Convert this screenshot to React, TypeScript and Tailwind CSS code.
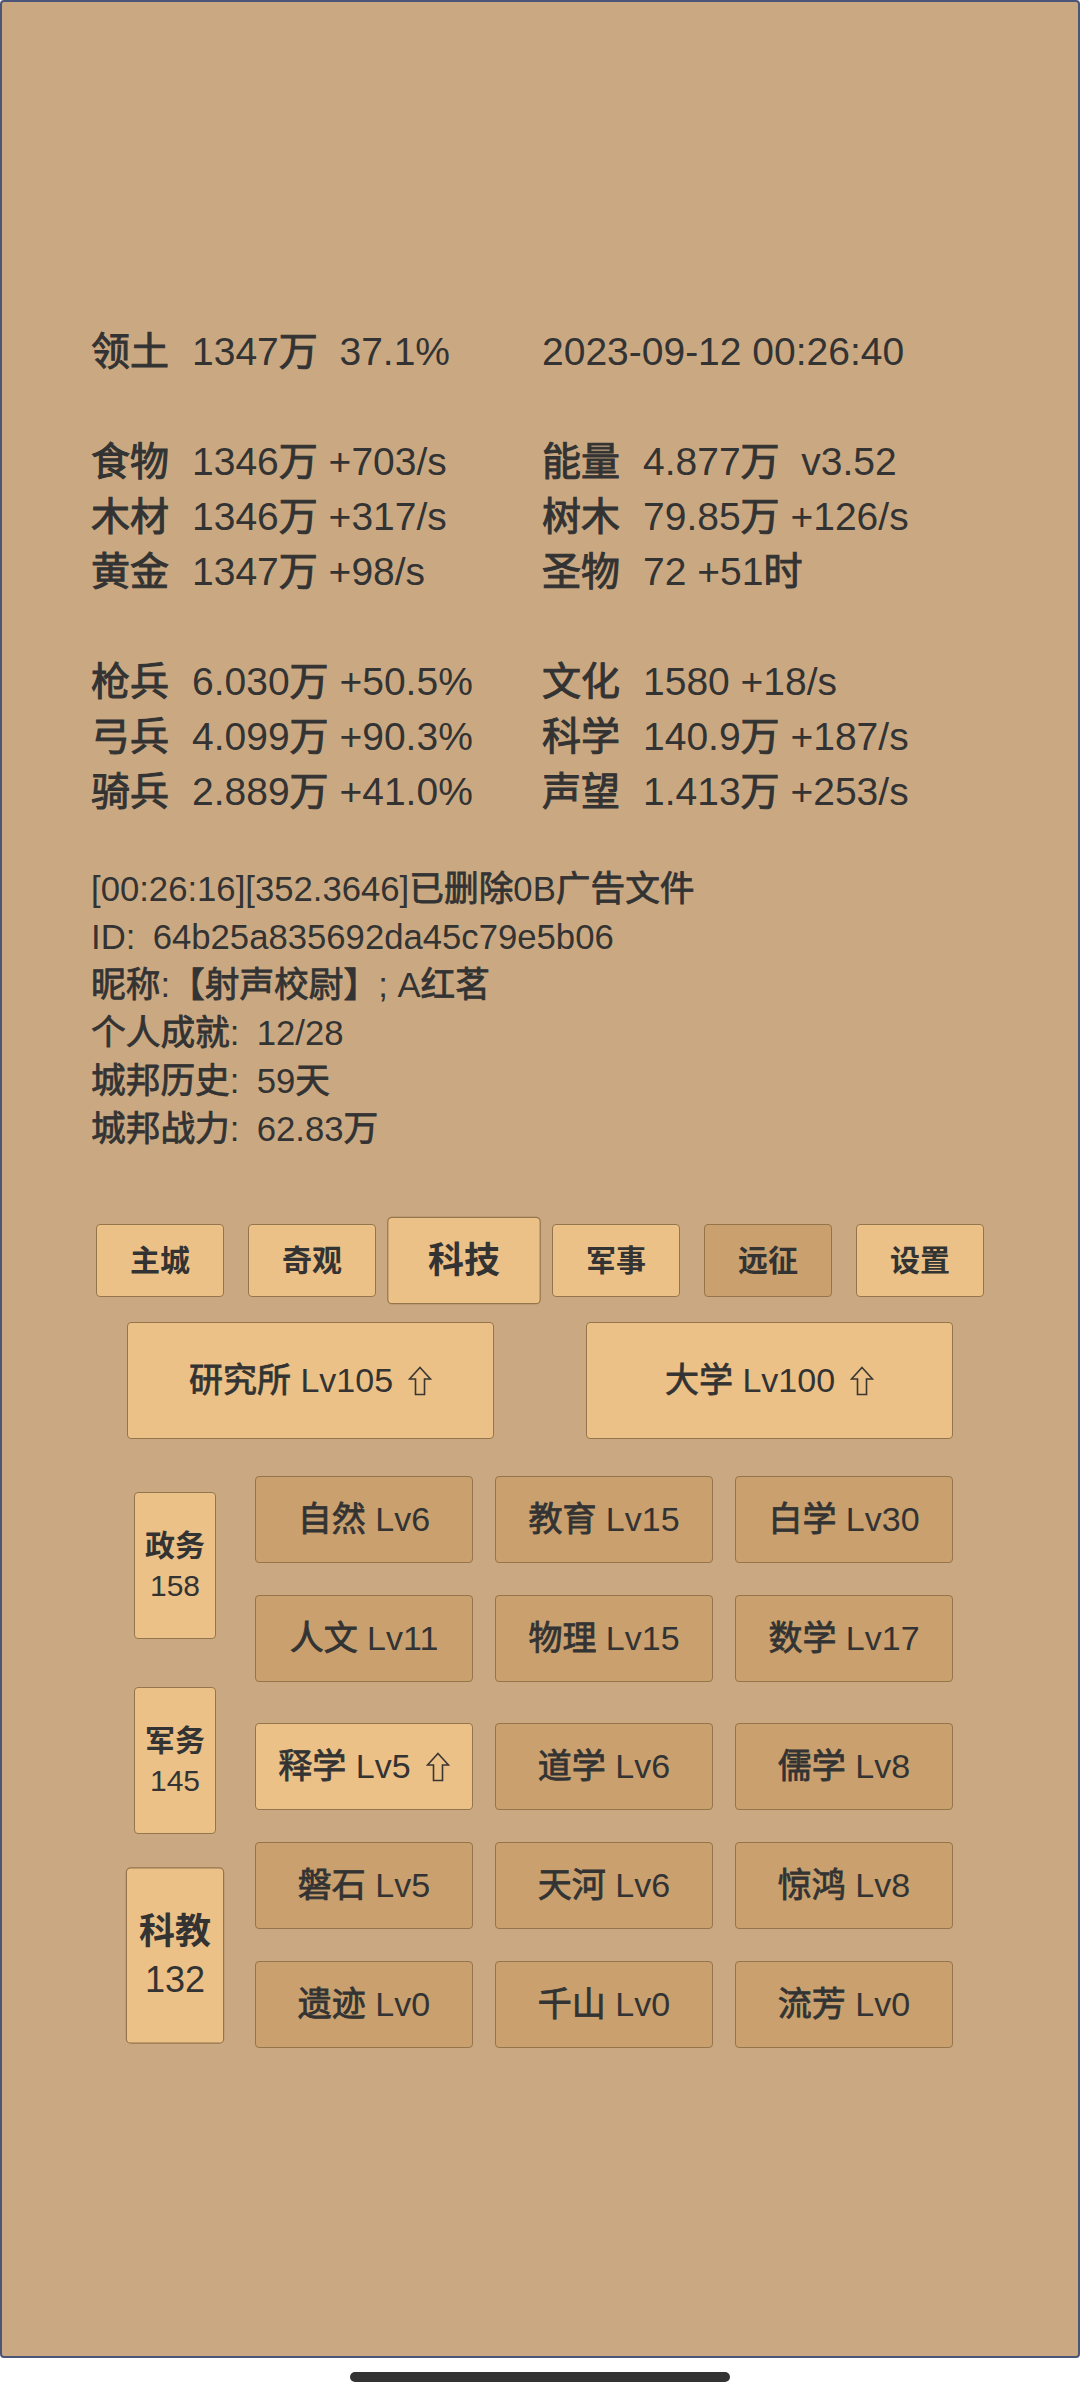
import React from "react";

type Stat = { label: string; value: string };

const statRows: ([Stat, Stat] | null)[] = [
  [
    { label: "领土", value: "1347万  37.1%" },
    { label: "", value: "2023-09-12 00:26:40" },
  ],
  null,
  [
    { label: "食物", value: "1346万 +703/s" },
    { label: "能量", value: "4.877万  v3.52" },
  ],
  [
    { label: "木材", value: "1346万 +317/s" },
    { label: "树木", value: "79.85万 +126/s" },
  ],
  [
    { label: "黄金", value: "1347万 +98/s" },
    { label: "圣物", value: "72 +51时" },
  ],
  null,
  [
    { label: "枪兵", value: "6.030万 +50.5%" },
    { label: "文化", value: "1580 +18/s" },
  ],
  [
    { label: "弓兵", value: "4.099万 +90.3%" },
    { label: "科学", value: "140.9万 +187/s" },
  ],
  [
    { label: "骑兵", value: "2.889万 +41.0%" },
    { label: "声望", value: "1.413万 +253/s" },
  ],
];

const infoLines = [
  "[00:26:16][352.3646]已删除0B广告文件",
  "ID:\u200264b25a835692da45c79e5b06",
  "昵称:【射声校尉】; A红茗",
  "个人成就:\u200212/28",
  "城邦历史:\u200259天",
  "城邦战力:\u200262.83万",
];

const tabs = [
  { name: "主城" },
  { name: "奇观" },
  { name: "科技", active: true },
  { name: "军事" },
  { name: "远征", dark: true },
  { name: "设置" },
];

const sideItems = [
  { name: "政务", count: 158 },
  { name: "军务", count: 145 },
  { name: "科教", count: 132, active: true },
];

type Tech = { name: string; lv: number; up?: boolean };

const techGroups: Tech[][][] = [
  [
    [
      { name: "自然", lv: 6 },
      { name: "教育", lv: 15 },
      { name: "白学", lv: 30 },
    ],
    [
      { name: "人文", lv: 11 },
      { name: "物理", lv: 15 },
      { name: "数学", lv: 17 },
    ],
  ],
  [
    [
      { name: "释学", lv: 5, up: true },
      { name: "道学", lv: 6 },
      { name: "儒学", lv: 8 },
    ],
    [
      { name: "磐石", lv: 5 },
      { name: "天河", lv: 6 },
      { name: "惊鸿", lv: 8 },
    ],
    [
      { name: "遗迹", lv: 0 },
      { name: "千山", lv: 0 },
      { name: "流芳", lv: 0 },
    ],
  ],
];

const CJK = /([\u3000-\u303f\u4e00-\u9fff\uff00-\uffef]+)/;

// CJK runs render a little heavier than regular in the game font
function Txt({ text, heavy }: { text: string; heavy?: boolean }) {
  const parts = text.split(CJK);
  return (
    <span className="whitespace-pre">
      {parts.map((p, i) =>
        CJK.test(p) ? (
          <span
            key={i}
            className={heavy ? "[-webkit-text-stroke:1px_#333]" : "[-webkit-text-stroke:0.8px_#333]"}
          >
            {p}
          </span>
        ) : (
          p
        )
      )}
    </span>
  );
}

function UpArrow() {
  return (
    <svg
      viewBox="0 0 24 30"
      className="ml-[15px] h-[30px] w-[24px] shrink-0"
      fill="none"
      stroke="#3a3632"
      strokeWidth="1.6"
    >
      <path d="M12 1.5 L22.5 13 H16.5 V28.5 H7.5 V13 H1.5 Z" />
    </svg>
  );
}

export default function App() {
  return (
    <div className="flex h-[2400px] w-[1080px] flex-col bg-white font-['Liberation_Sans','Noto_Sans_CJK_SC',sans-serif] text-[#333]">
      <div className="h-[2358px] rounded-[4px] border-2 border-[#4b5578] bg-[#caa982] pt-[322px]">
        {/* stats */}
        <div className="pl-[89px] text-[39px] leading-[55px]">
          {statRows.map((row, i) =>
            row ? (
              <div key={i} className="flex">
                {row.map((s, j) => (
                  <div key={j} className={j === 0 ? "flex w-[451px]" : "flex"}>
                    {s.label && (
                      <span className="w-[101px] shrink-0">
                        <Txt text={s.label} heavy />
                      </span>
                    )}
                    <Txt text={s.value} heavy />
                  </div>
                ))}
              </div>
            ) : (
              <div key={i} className="h-[55px]" />
            )
          )}
        </div>

        {/* info */}
        <div className="mt-[46px] pl-[89px] text-[34.7px] leading-[48px]">
          {infoLines.map((l) => (
            <div key={l}>
              <Txt text={l} />
            </div>
          ))}
        </div>

        {/* tabs */}
        <div className="mt-[71px] flex justify-center gap-[24px]">
          {tabs.map((t) => (
            <button
              key={t.name}
              className={
                "flex h-[73px] w-[128px] items-center justify-center rounded-[4px] border border-[#94754c] text-[30px] font-bold " +
                (t.dark ? "bg-[#c9a06e] " : "bg-[#ebc187] ") +
                (t.active ? "scale-[1.2]" : "")
              }
            >
              {t.name}
            </button>
          ))}
        </div>

        {/* buildings */}
        <div className="mt-[25px] flex justify-center gap-[92px]">
          {["研究所 Lv105", "大学 Lv100"].map((b) => (
            <button
              key={b}
              className="flex h-[117px] w-[367px] items-center justify-center rounded-[4px] border border-[#94754c] bg-[#ebc187] text-[34px]"
            >
              <Txt text={b} />
              <UpArrow />
            </button>
          ))}
        </div>

        {/* tech grid */}
        <div className="mx-auto mt-[37px] flex w-[828px]">
          <div className="flex w-[98px] flex-col items-center gap-[48px] pt-[16px]">
            {sideItems.map((s) => (
              <button
                key={s.name}
                className={
                  "flex h-[147px] w-[82px] flex-col items-center justify-center rounded-[4px] border border-[#94754c] bg-[#ebc187] text-[30px] leading-[40px] " +
                  (s.active ? "scale-[1.2]" : "")
                }
              >
                <span className="font-bold">{s.name}</span>
                <span>{s.count}</span>
              </button>
            ))}
          </div>

          <div className="ml-[31px] flex flex-col gap-[41px]">
            {techGroups.map((group, gi) => (
              <div key={gi} className="flex flex-col gap-[32px]">
                {group.map((row, ri) => (
                  <div key={ri} className="flex gap-[22px]">
                    {row.map((t) => (
                      <button
                        key={t.name}
                        className={
                          "flex h-[87px] w-[218px] items-center justify-center rounded-[4px] border border-[#94754c] text-[34px] " +
                          (t.up ? "bg-[#ebc187]" : "bg-[#c9a06e]")
                        }
                      >
                        <Txt text={`${t.name} Lv${t.lv}`} />
                        {t.up && <UpArrow />}
                      </button>
                    ))}
                  </div>
                ))}
              </div>
            ))}
          </div>
        </div>
      </div>

      <div className="flex flex-1 justify-center pt-[14px]">
        <div className="h-[10px] w-[380px] rounded-full bg-[#333]" />
      </div>
    </div>
  );
}
